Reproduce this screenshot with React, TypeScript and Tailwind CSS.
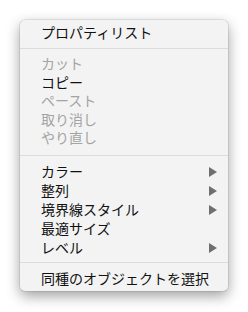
import React from "react";

type Item = { label: string; disabled?: boolean; sub?: boolean };

const Arrow = () => (
  <svg width="8" height="10" viewBox="0 0 8 10" className="block">
    <path d="M0 0 L8 5 L0 10 Z" fill="#6f6f6f" />
  </svg>
);

const Row = ({ item, tall }: { item: Item; tall?: boolean }) => (
  <div
    className={`flex ${tall ? "h-[19px]" : "h-[18.5px]"} items-center justify-between pl-[21px] pr-[11px]`}
  >
    <span className={item.disabled ? "text-[#a4a4a4]" : "text-[#111111]"}>{item.label}</span>
    {item.sub ? <Arrow /> : null}
  </div>
);

export default function App() {
  const g1: Item[] = [
    { label: "カット", disabled: true },
    { label: "コピー" },
    { label: "ペースト", disabled: true },
    { label: "取り消し", disabled: true },
    { label: "やり直し", disabled: true },
  ];
  const g2: Item[] = [
    { label: "カラー", sub: true },
    { label: "整列", sub: true },
    { label: "境界線スタイル", sub: true },
    { label: "最適サイズ" },
    { label: "レベル", sub: true },
  ];
  return (
    <div className="w-[248px] h-[312px] bg-white pt-[20px] pl-[20px]">
      <div
        className="w-[208px] h-[271px] rounded-[5px] bg-[#f3f3f3] pt-[3px] shadow-[0_5px_14px_rgba(0,0,0,0.38),0_0_0_0.5px_rgba(0,0,0,0.15)] text-[14px] leading-[19px]"
        style={{ fontFamily: '"Noto Sans CJK JP", "Noto Sans", sans-serif' }}
      >
        <Row item={{ label: "プロパティリスト" }} />
        <div className="pt-[6px] pb-[6px]">
          <div className="h-px bg-[#dcdcdc]" />
        </div>
        {g1.map((i) => (
          <Row key={i.label} item={i} />
        ))}
        <div className="pt-[7.5px] pb-[6.5px]">
          <div className="h-px bg-[#dcdcdc]" />
        </div>
        {g2.map((i) => (
          <Row key={i.label} item={i} tall />
        ))}
        <div className="pt-[5px] pb-[5.5px]">
          <div className="h-px bg-[#dcdcdc]" />
        </div>
        <Row item={{ label: "同種のオブジェクトを選択" }} tall />
      </div>
    </div>
  );
}
